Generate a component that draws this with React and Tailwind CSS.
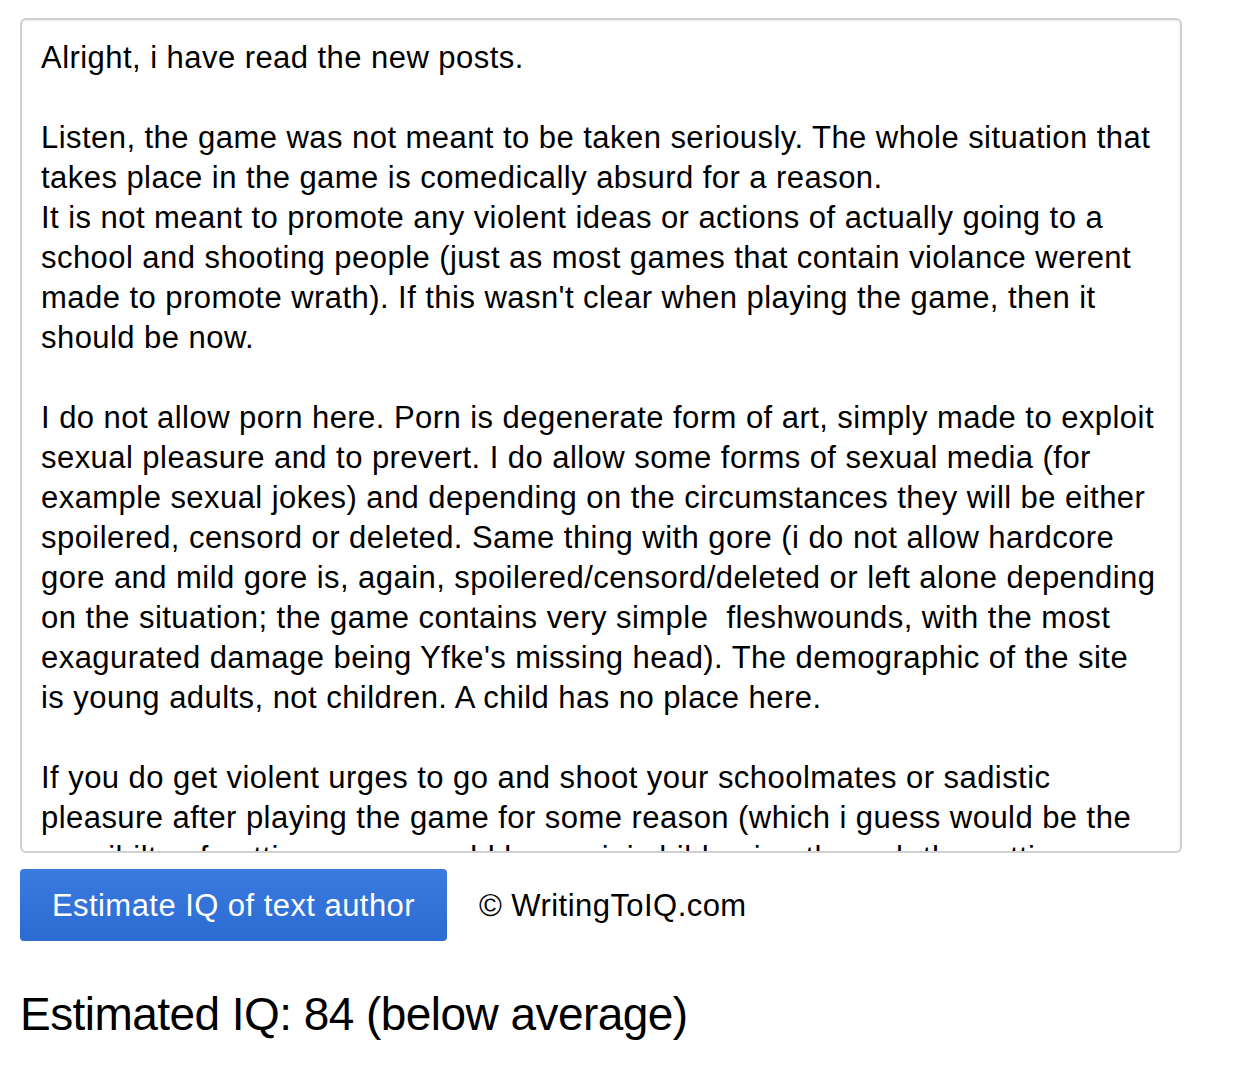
export default function App() {
  const lines = [
    'Alright, i have read the new posts.',
    '',
    'Listen, the game was not meant to be taken seriously. The whole situation that',
    'takes place in the game is comedically absurd for a reason.',
    'It is not meant to promote any violent ideas or actions of actually going to a',
    'school and shooting people (just as most games that contain violance werent',
    "made to promote wrath). If this wasn't clear when playing the game, then it",
    'should be now.',
    '',
    'I do not allow porn here. Porn is degenerate form of art, simply made to exploit',
    'sexual pleasure and to prevert. I do allow some forms of sexual media (for',
    'example sexual jokes) and depending on the circumstances they will be either',
    'spoilered, censord or deleted. Same thing with gore (i do not allow hardcore',
    'gore and mild gore is, again, spoilered/censord/deleted or left alone depending',
    'on the situation; the game contains very simple  fleshwounds, with the most',
    "exagurated damage being Yfke's missing head). The demographic of the site",
    'is young adults, not children. A child has no place here.',
    '',
    'If you do get violent urges to go and shoot your schoolmates or sadistic',
    'pleasure after playing the game for some reason (which i guess would be the',
    'possibilty of getting urges would be a mini child going through the setting',
  ];

  return (
    <div className="min-h-screen bg-white font-['Liberation_Sans',Arial,sans-serif] text-black">
      <div className="pl-5 pt-[18px]">
        {/* Text box */}
        <div className="w-[1162px] h-[835px] overflow-hidden rounded-md border-2 border-[#d0d0d0] bg-white shadow-[inset_0_1px_2px_rgba(0,0,0,0.08)] pl-[19px] pr-2 pt-[18px]">
          {lines.map((line, i) => (
            <div key={i} className="h-10 whitespace-pre text-[31px] leading-10 tracking-[0.45px]">
              {line}
            </div>
          ))}
        </div>

        {/* Actions */}
        <div className="mt-[16px] flex items-center gap-8">
          <button className="h-[72px] w-[427px] rounded-[4px] bg-gradient-to-b from-[#3a7be0] to-[#2c6bd2] pt-[2px] text-[31px] tracking-[0.45px] text-white">
            Estimate IQ of text author
          </button>
          <span className="pt-[2px] text-[31px] tracking-[0.45px]">© WritingToIQ.com</span>
        </div>

        {/* Result */}
        <div className="mt-[48px] text-[46px] leading-[50px] tracking-[-0.55px]">Estimated IQ: 84 (below average)</div>
      </div>
    </div>
  );
}
